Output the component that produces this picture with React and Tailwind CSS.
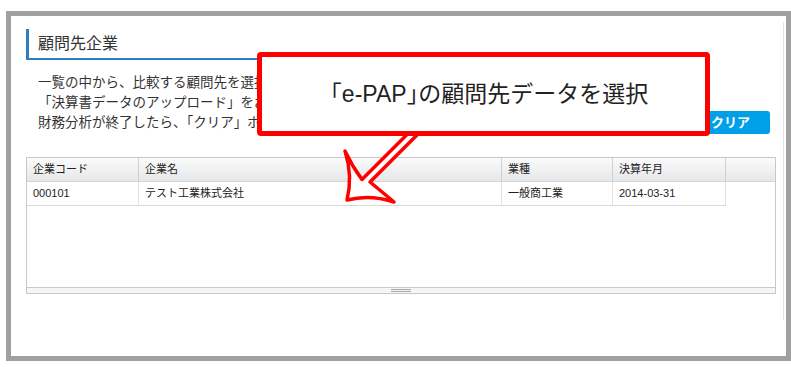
export default function App() {
  // 列幅は実寸に合わせて固定
  const columns = [
    { label: '企業コード', width: 'w-[112px]', value: '000101' },
    { label: '企業名', width: 'w-[363px]', value: 'テスト工業株式会社' },
    { label: '業種', width: 'w-[111px]', value: '一般商工業' },
    { label: '決算年月', width: 'w-[113px]', value: '2014-03-31' },
  ]

  return (
    <div className="relative w-[791px] h-[367px] bg-white pl-[6px] pt-[11px] font-['Liberation_Sans','Noto_Sans_CJK_JP',sans-serif] text-[#333]">
      <div className="w-[785px] h-[350px] border-[5px] border-[#a0a0a0] pt-[6px]">
        <div className="w-[773px] h-[298px] border-r border-[#dde6ee] pl-[15px] pt-[7px]">
          <h2 className="w-[430px] h-[31px] border-l-[3px] border-b-2 border-[#2f7fc0] pl-[9px] text-[16px] leading-[29px] font-normal">
            顧問先企業
          </h2>

          <div className="flex w-[750px] mt-[13px]">
            <div className="pl-[12px] text-[13.5px] leading-[20px] whitespace-nowrap">
              <div>一覧の中から、比較する顧問先を選択してください。</div>
              <div>「決算書データのアップロード」をおこなってください。</div>
              <div>財務分析が終了したら、「クリア」ボタンを押してください。</div>
            </div>
            <button className="ml-auto mr-[6px] self-end mb-[-1px] w-[79px] h-[23px] rounded-[3px] bg-[#00a0e8] text-white text-[13px] font-bold leading-[23px]">
              クリア
            </button>
          </div>

          <div className="mt-[24px] w-[750px] border border-[#c8c8c8] text-[11px] text-[#222]">
            <div className="flex h-[24px] border-b border-[#d4d4d4] bg-linear-to-b from-[#fbfbfb] to-[#e6e7e9]">
              {columns.map((c) => (
                <div key={c.label} className={`${c.width} border-r border-[#d0d0d0] px-[6px] leading-[23px]`}>
                  {c.label}
                </div>
              ))}
              <div className="flex-1" />
            </div>
            <div className="flex w-[699px] h-[24px] border-b border-[#d8d8d8]">
              {columns.map((c) => (
                <div key={c.label} className={`${c.width} border-r border-[#e2e2e2] px-[6px] leading-[23px]`}>
                  {c.value}
                </div>
              ))}
            </div>
            <div className="h-[81px]" />
            <div className="flex h-[6px] items-center justify-center border-t border-[#c8c8c8] bg-[#f6f6f6]">
              <div className="w-[20px] h-[3px] border-y border-[#a8a8a8]" />
            </div>
          </div>
        </div>
      </div>

      {/* 吹き出しの矢印 */}
      <svg className="absolute left-0 top-0 pointer-events-none" width="791" height="367" viewBox="0 0 791 367">
        <path
          d="M 411.5 130 L 362 179.5 Q 352 166 345 151 Q 353 176 347 200 Q 370 194 394 202 Q 381 191 370 182 L 422 130 Z"
          fill="#fff"
          stroke="#ff0000"
          strokeWidth="3.5"
          strokeLinejoin="round"
        />
      </svg>

      <div className="absolute left-[257px] top-[52px] w-[453px] h-[84px] border-[5px] border-[#ff0000] rounded-[4px] bg-white flex items-center justify-center text-[23px] text-[#222] whitespace-nowrap">
        「e-PAP<span className="[font-feature-settings:'halt']">」</span>の顧問先データを選択
      </div>
    </div>
  )
}
